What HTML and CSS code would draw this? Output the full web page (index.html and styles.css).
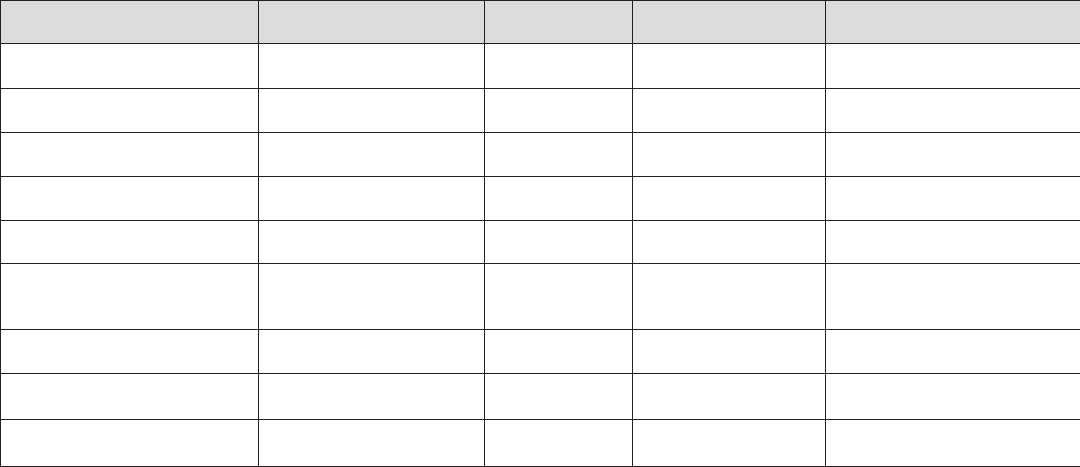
FILE: index.html
```html
<!DOCTYPE html>
<html lang="en">
<head>
<meta charset="utf-8">
<title>Table</title>
<link rel="stylesheet" href="styles.css">
</head>
<body>
<table class="grid">
  <colgroup>
    <col class="c1"><col class="c2"><col class="c3"><col class="c4"><col class="c5">
  </colgroup>
  <thead>
    <tr class="r-head"><th></th><th></th><th></th><th></th><th></th></tr>
  </thead>
  <tbody>
    <tr class="r45"><td></td><td></td><td></td><td></td><td></td></tr>
    <tr class="r44"><td></td><td></td><td></td><td></td><td></td></tr>
    <tr class="r44"><td></td><td></td><td></td><td></td><td></td></tr>
    <tr class="r44"><td></td><td></td><td></td><td></td><td></td></tr>
    <tr class="r43"><td></td><td></td><td></td><td></td><td></td></tr>
    <tr class="r66"><td></td><td></td><td></td><td></td><td></td></tr>
    <tr class="r44"><td></td><td></td><td></td><td></td><td></td></tr>
    <tr class="r46"><td></td><td></td><td></td><td></td><td></td></tr>
    <tr class="r47"><td></td><td></td><td></td><td></td><td></td></tr>
  </tbody>
</table>
</body>
</html>
```

FILE: styles.css
```css
html, body {
  margin: 0;
  padding: 0;
  background: #ffffff;
}

body {
  font-family: "Liberation Sans", Arial, sans-serif;
  font-size: 14px;
  color: #222222;
}

.grid {
  border-collapse: collapse;
  table-layout: fixed;
  width: 1080px;
}

.c1 { width: 258px; }
.c2 { width: 226px; }
.c3 { width: 148px; }
.c4 { width: 193px; }
.c5 { width: 255px; }

.grid th,
.grid td {
  border: 1px solid #231f20;
  padding: 0;
}

.grid th {
  background: #dcdcdc;
}

.r-head { height: 43px; }
.r43 { height: 43px; }
.r44 { height: 44px; }
.r45 { height: 45px; }
.r46 { height: 46px; }
.r47 { height: 47px; }
.r66 { height: 66px; }
```
